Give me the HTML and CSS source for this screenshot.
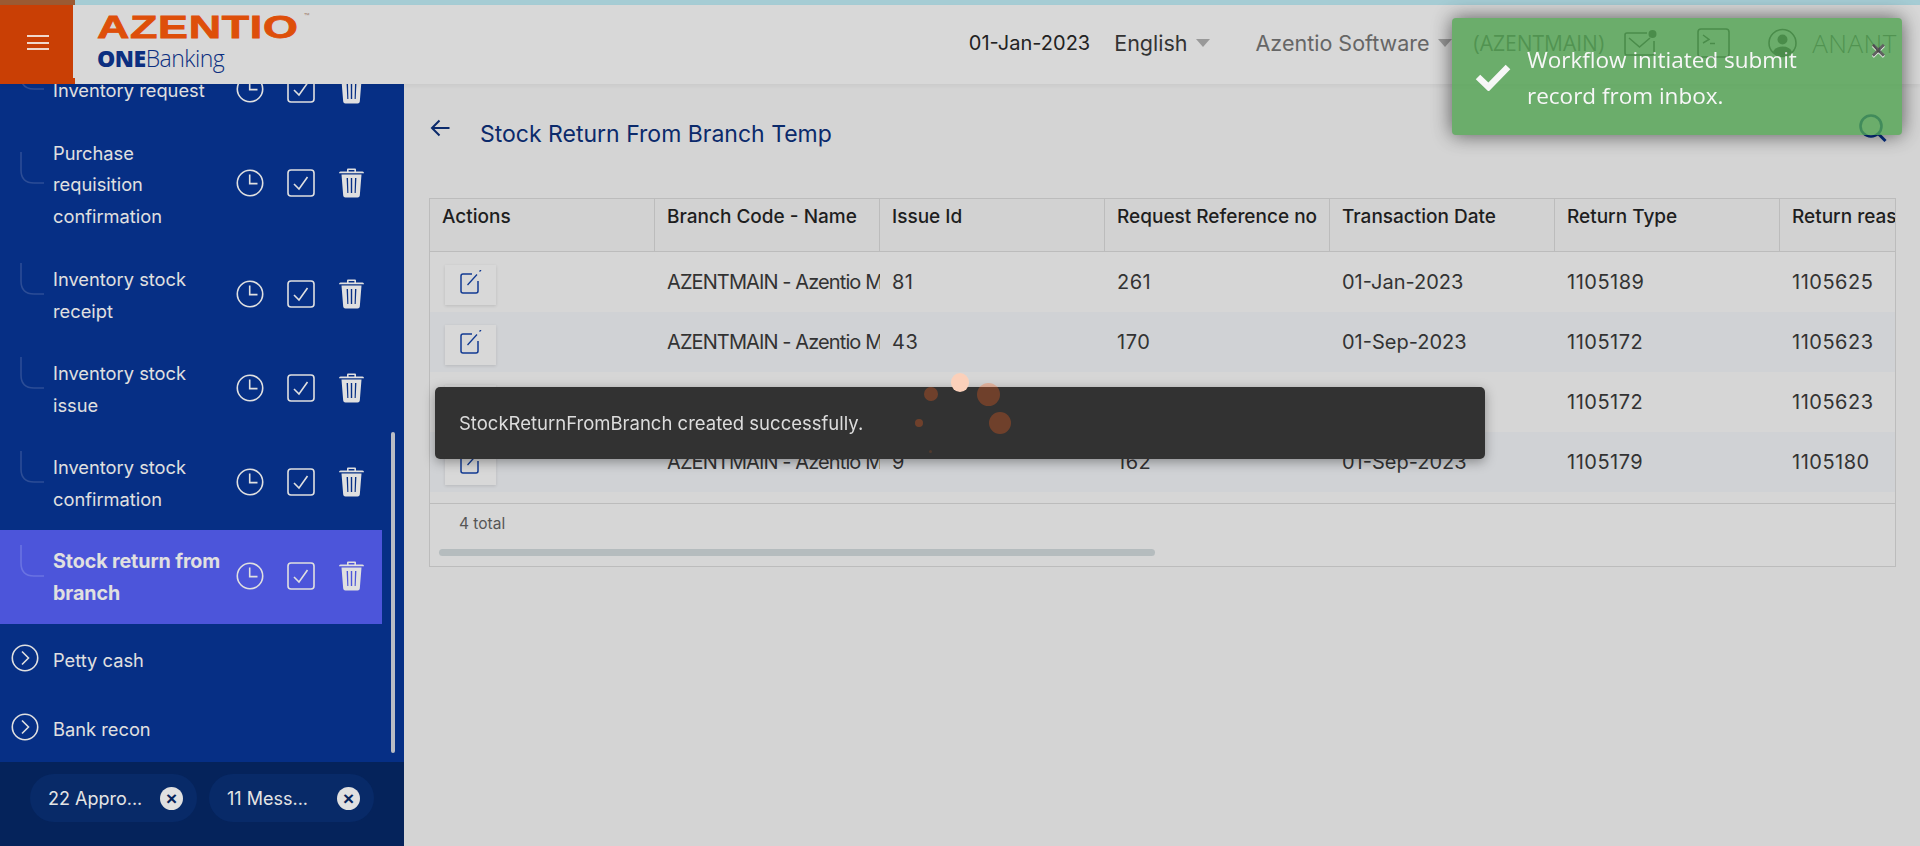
FILE: index.html
```html
<!DOCTYPE html>
<html lang="en">
<head>
<meta charset="utf-8">
<title>Stock Return From Branch Temp</title>
<link rel="stylesheet" href="styles.css">
</head>
<body>
<svg class="defs" width="0" height="0" aria-hidden="true">
  <symbol id="i-clock" viewBox="0 0 28 28"><circle cx="14" cy="14" r="12.7" fill="none" stroke="currentColor" stroke-width="1.6"/><path d="M13.7 5.5V14.6H21.5" fill="none" stroke="currentColor" stroke-width="1.6"/></symbol>
  <symbol id="i-check" viewBox="0 0 28 28"><rect x="1" y="1" width="26" height="26" rx="3" fill="none" stroke="currentColor" stroke-width="1.6"/><path d="M7 15L12 20L20.5 8" fill="none" stroke="currentColor" stroke-width="1.6"/></symbol>
  <symbol id="i-trash" viewBox="0 0 25 30"><path fill="currentColor" fill-rule="evenodd" d="M8 1.5Q8 .5 9 .5H16Q17 .5 17 1.5V3.5H23.5Q25 3.5 25 5.2H0Q0 3.5 1.5 3.5H8ZM9.6 3.5H15.4V2H9.6ZM2.5 6.5H22.5L20.8 27.5Q20.6 29.5 18.6 29.5H6.4Q4.4 29.5 4.2 27.5ZM7.6 10L8.3 25H9.4L9 10ZM11.8 10V25H13.2V10ZM16 10L15.6 25H16.7L17.4 10Z"/></symbol>
  <symbol id="i-chev" viewBox="0 0 28 28"><circle cx="14" cy="14" r="12.7" fill="none" stroke="currentColor" stroke-width="1.6"/><path d="M11 7.5L17.5 14L11 20.5" fill="none" stroke="currentColor" stroke-width="1.6"/></symbol>
  <symbol id="i-elbow" viewBox="0 0 24 66"><path d="M1 1V19Q1 32 14 32H24" fill="none" stroke="currentColor" stroke-width="1.6"/></symbol>
  <symbol id="i-edit" viewBox="0 0 22 24"><path d="M12 4H3Q1 4 1 6V21Q1 23 3 23H16Q18 23 18 21V11" fill="none" stroke="currentColor" stroke-width="1.5"/><path d="M7.5 15L17 4.5M19.5 1.5L21 0" fill="none" stroke="currentColor" stroke-width="1.3"/></symbol>
</svg>

<div class="strip"><div class="strip-brand"></div><div class="strip-rest"></div></div>

<header class="topbar">
  <button class="menu-btn" aria-label="Menu"><span></span><span></span><span></span></button>
  <div class="logo">
    <div class="logo-mark"><span class="logo-word">AZENTIO</span><span class="logo-tm">™</span></div>
    <div class="logo-sub"><b>ONE</b>Banking</div>
  </div>
  <div class="top-right">
    <span class="top-date">01-Jan-2023</span>
    <span class="top-select lang">English<i class="caret"></i></span>
    <span class="top-select org">Azentio Software<i class="caret"></i></span>
    <span class="top-branch">(AZENTMAIN)</span>
    <svg class="ic-mail" width="33" height="26" viewBox="0 0 33 26"><path d="M23 3H3Q1 3 1 5V23Q1 25 3 25H28Q30 25 30 23V11" fill="none" stroke="currentColor" stroke-width="1.6"/><path d="M5 8L15.5 17L26 8" fill="none" stroke="currentColor" stroke-width="1.6"/><circle cx="28.5" cy="4" r="4" fill="currentColor"/></svg>
    <svg class="ic-term" width="33" height="30" viewBox="0 0 33 30"><rect x="1" y="1" width="31" height="28" rx="3" fill="none" stroke="currentColor" stroke-width="1.6"/><path d="M6 7L12 11.5L6 15M13 15.5H18" fill="none" stroke="currentColor" stroke-width="1.5"/></svg>
    <svg class="ic-user" width="29" height="30" viewBox="0 0 29 30"><circle cx="14.5" cy="15" r="13.5" fill="none" stroke="currentColor" stroke-width="1.6"/><circle cx="14.5" cy="11.5" r="5" fill="currentColor"/><path d="M5 24Q7 18.5 14.5 18.5T24 24Q20 28 14.5 28T5 24Z" fill="currentColor"/></svg>
    <span class="top-user">ANANT</span>
  </div>
</header>

<div class="layout">
  <aside class="sidebar">
    <nav class="menu">
      <div class="item one"><svg class="elbow"><use href="#i-elbow"/></svg><span class="item-text">Inventory request</span><span class="acts"><svg class="a-clock"><use href="#i-clock"/></svg><svg class="a-check"><use href="#i-check"/></svg><svg class="a-trash"><use href="#i-trash"/></svg></span></div>
      <div class="item three"><svg class="elbow"><use href="#i-elbow"/></svg><span class="item-text">Purchase requisition confirmation</span><span class="acts"><svg class="a-clock"><use href="#i-clock"/></svg><svg class="a-check"><use href="#i-check"/></svg><svg class="a-trash"><use href="#i-trash"/></svg></span></div>
      <div class="item"><svg class="elbow"><use href="#i-elbow"/></svg><span class="item-text">Inventory stock receipt</span><span class="acts"><svg class="a-clock"><use href="#i-clock"/></svg><svg class="a-check"><use href="#i-check"/></svg><svg class="a-trash"><use href="#i-trash"/></svg></span></div>
      <div class="item"><svg class="elbow"><use href="#i-elbow"/></svg><span class="item-text">Inventory stock issue</span><span class="acts"><svg class="a-clock"><use href="#i-clock"/></svg><svg class="a-check"><use href="#i-check"/></svg><svg class="a-trash"><use href="#i-trash"/></svg></span></div>
      <div class="item"><svg class="elbow"><use href="#i-elbow"/></svg><span class="item-text">Inventory stock confirmation</span><span class="acts"><svg class="a-clock"><use href="#i-clock"/></svg><svg class="a-check"><use href="#i-check"/></svg><svg class="a-trash"><use href="#i-trash"/></svg></span></div>
      <div class="item active"><svg class="elbow"><use href="#i-elbow"/></svg><span class="item-text">Stock return from branch</span><span class="acts"><svg class="a-clock"><use href="#i-clock"/></svg><svg class="a-check"><use href="#i-check"/></svg><svg class="a-trash"><use href="#i-trash"/></svg></span></div>
      <div class="group"><svg class="a-clock"><use href="#i-chev"/></svg><span>Petty cash</span></div>
      <div class="group"><svg class="a-clock"><use href="#i-chev"/></svg><span>Bank recon</span></div>
      <div class="scroll-thumb"></div>
    </nav>
    <div class="chips">
      <div class="chip chip-a"><span class="chip-text">22 Appro...</span><span class="chip-x">×</span></div>
      <div class="chip chip-b"><span class="chip-text">11 Mess...</span><span class="chip-x">×</span></div>
    </div>
  </aside>

  <main class="content">
    <div class="page-head">
      <svg class="back" width="20" height="18" viewBox="0 0 20 18"><path d="M19.5 9H2M9.5 1.5L2 9L9.5 16.5" fill="none" stroke="currentColor" stroke-width="2"/></svg>
      <h1 class="page-title">Stock Return From Branch Temp</h1>
      <svg class="search" width="28" height="29" viewBox="0 0 28 29"><circle cx="12" cy="12" r="10.5" fill="none" stroke="currentColor" stroke-width="2.6"/><path d="M19.5 20L26.5 27" fill="none" stroke="currentColor" stroke-width="3"/></svg>
    </div>

    <section class="grid-card">
      <div class="grid-scroll">
        <table class="grid">
          <thead>
            <tr><th>Actions</th><th>Branch Code - Name</th><th>Issue Id</th><th>Request Reference no</th><th>Transaction Date</th><th>Return Type</th><th>Return reason</th></tr>
          </thead>
          <tbody>
            <tr><td><span class="edit"><svg width="22" height="24"><use href="#i-edit"/></svg></span></td><td class="name">AZENTMAIN - Azentio Main Branch</td><td class="num">81</td><td class="num">261</td><td>01-Jan-2023</td><td class="num">1105189</td><td class="num">1105625</td></tr>
            <tr><td><span class="edit"><svg width="22" height="24"><use href="#i-edit"/></svg></span></td><td class="name">AZENTMAIN - Azentio Main Branch</td><td class="num">43</td><td class="num">170</td><td>01-Sep-2023</td><td class="num">1105172</td><td class="num">1105623</td></tr>
            <tr><td><span class="edit"><svg width="22" height="24"><use href="#i-edit"/></svg></span></td><td></td><td></td><td></td><td></td><td class="num">1105172</td><td class="num">1105623</td></tr>
            <tr><td><span class="edit"><svg width="22" height="24"><use href="#i-edit"/></svg></span></td><td class="name">AZENTMAIN - Azentio Main Branch</td><td class="num">9</td><td class="num">162</td><td>01-Sep-2023</td><td class="num">1105179</td><td class="num">1105180</td></tr>
          </tbody>
        </table>
      </div>
      <div class="grid-foot">4 total</div>
      <div class="hscroll"><div class="hscroll-thumb"></div></div>
    </section>
  </main>
</div>

<div class="snack">StockReturnFromBranch created successfully.</div>

<div class="spinner" aria-hidden="true">
  <i class="dot d1"></i><i class="dot d2"></i><i class="dot d3"></i><i class="dot d4"></i><i class="dot d5"></i><i class="dot d6"></i>
</div>

<div class="toast">
  <svg class="toast-check" width="36" height="28" viewBox="0 0 36 28"><path d="M3 14L13.5 24L33 4" fill="none" stroke="currentColor" stroke-width="6.5"/></svg>
  <div class="toast-msg">Workflow initiated submit record from inbox.</div>
  <span class="toast-close">×</span>
</div>
</body>
</html>
```

FILE: styles.css
```css
* { box-sizing: border-box; }
html, body { height: 100%; }
body {
  margin: 0;
  display: flex;
  flex-direction: column;
  overflow: hidden;
  background: #d4d4d4;
  color: #333;
  font-family: Inter, "Liberation Sans", sans-serif;
  font-size: 18px;
}
.defs { position: absolute; }

.strip { display: flex; flex: 0 0 5px; }
.strip-brand { width: 75px; background: #9b5a33; }
.strip-rest { flex: 1; background: #a5ccd4; }

.topbar {
  flex: 0 0 79px;
  display: flex;
  align-items: flex-start;
  background: #d8d8d8;
  box-shadow: 0 2px 4px rgba(0, 0, 0, .05);
  position: relative;
  z-index: 2;
}
.menu-btn {
  width: 75px;
  height: 79px;
  flex: none;
  border: 0;
  padding: 0 0 4px;
  background: #c93f05;
  display: flex;
  flex-direction: column;
  align-items: center;
  justify-content: center;
  gap: 4.5px;
}
.menu-btn span { display: block; width: 22px; height: 2px; background: #f0d8cc; }
.logo {
  margin-left: -2px;
  width: 300px;
  height: 73px;
  background: #d8d8d8;
  position: relative;
  padding: 6px 0 0 24px;
}
.logo-mark { display: flex; align-items: flex-start; height: 32px; color: #de4f0a; }
.logo-word {
  font: 900 32px/32px "Liberation Sans", sans-serif;
  letter-spacing: .5px;
  -webkit-text-stroke: .8px currentColor;
  transform: scaleX(1.4);
  transform-origin: left center;
  display: inline-block;
  width: 207px;
  white-space: nowrap;
}
.logo-tm { font-size: 9px; line-height: 10px; margin-top: 1px; color: #a08070; }
.logo-sub {
  margin-top: 1px;
  color: #0c2f80;
  font: 300 23px/28px "Open Sans", sans-serif;
  letter-spacing: -.5px;
}
.logo-sub b { font-weight: 800; }

.top-right {
  flex: 1;
  display: flex;
  align-items: center;
  justify-content: flex-end;
  height: 75px;
  padding-right: 23px;
  color: #333;
}
.top-date { margin-right: 24px; font-size: 20px; color: #222; white-space: nowrap; }
.top-select { display: inline-flex; align-items: center; white-space: nowrap; font-size: 21.5px; }
.lang { margin-right: 46px; color: #333; }
.org { margin-right: 22px; color: #666; }
.caret {
  margin-left: 8px;
  width: 0;
  height: 0;
  border: 7px solid transparent;
  border-top: 8px solid #999;
  border-bottom: 0;
}
.top-branch { font: 21px "Open Sans", sans-serif; color: #555; margin-right: 20px; white-space: nowrap; }
.ic-mail { color: #333; margin-right: 40px; }
.ic-term { color: #333; margin-right: 38px; }
.ic-user { color: #333; margin-right: 15px; }
.top-user { font: 300 26px "Open Sans", sans-serif; color: #555; letter-spacing: .5px; white-space: nowrap; }

.layout { flex: 1; min-height: 0; display: flex; }
.sidebar {
  width: 404px;
  flex: none;
  display: flex;
  flex-direction: column;
  background: #062f85;
  color: #e0e0e0;
}
.menu {
  flex: 1;
  min-height: 0;
  position: relative;
  display: flex;
  flex-direction: column;
  justify-content: flex-end;
  overflow: hidden;
  font-size: 18.3px;
}
.item {
  flex: none;
  width: 382px;
  height: 94px;
  padding-left: 20px;
  display: flex;
  align-items: center;
  line-height: 31.5px;
}
.item.one { height: 60px; }
.item.three { height: 128px; }
.item.active { background: #4c55da; font-weight: 700; font-size: 19.7px; letter-spacing: -.1px; }
.item.active .elbow { color: #6a73e2; }
.elbow { flex: none; width: 24px; height: 66px; color: #2c4d96; margin-right: 9px; }
.item-text { width: 172px; flex: none; padding-top: 1.5px; }
.acts { display: flex; align-items: center; margin: 0 0 2px 11px; }
.a-clock { width: 28px; height: 28px; flex: none; }
.a-check { width: 28px; height: 28px; flex: none; margin-left: 23px; }
.a-trash { width: 25px; height: 30px; flex: none; margin-left: 24px; }
.group {
  flex: none;
  height: 69px;
  padding: 3px 0 0 11px;
  display: flex;
  align-items: center;
  gap: 14px;
}
.group .a-clock { position: relative; top: -2px; }
.scroll-thumb {
  position: absolute;
  left: 391px;
  bottom: 9px;
  width: 4px;
  height: 321px;
  border-radius: 2px;
  background: #b9bcc4;
}
.chips {
  flex: 0 0 84px;
  background: #05235b;
  padding: 12px 0 0 30px;
  display: flex;
  align-items: flex-start;
  gap: 12px;
}
.chip {
  height: 48px;
  border-radius: 24px;
  background: #082a68;
  display: flex;
  align-items: center;
  padding-left: 18px;
  color: #e4e4e4;
  line-height: 24px;
}
.chip-a { width: 167px; }
.chip-b { width: 165px; }
.chip-text { flex: 1; white-space: nowrap; padding-top: 2px; }
.chip-x {
  width: 23px;
  height: 23px;
  margin-right: 14px;
  border-radius: 50%;
  background: #e0e0e0;
  color: #05235b;
  font: 700 19px/23px "Liberation Sans", sans-serif;
  text-align: center;
}

.content { flex: 1; min-width: 0; padding: 0 24px 0 25px; }
.page-head {
  height: 114px;
  display: flex;
  align-items: center;
  padding: 0 0 14px 1px;
  color: #0b2a6b;
}
.back { flex: none; position: relative; top: -6px; }
.page-title { margin: 0 0 0 30px; font-size: 23px; font-weight: 400; line-height: 30px; flex: 1; }
.search { flex: none; color: #062f85; margin: 0 9px 0 0; position: relative; top: -6px; }

.grid-card { border: 1px solid #bcbcbc; background: #d6d6d6; height: 369px; }
.grid-scroll { overflow: hidden; height: 305px; border-bottom: 1px solid #bcbcbc; }
.grid { table-layout: fixed; border-collapse: separate; border-spacing: 0; width: 1575px; }
.grid th {
  height: 53px;
  width: 225px;
  padding: 0 12px 17px;
  background: #d2d2d2;
  border-right: 1px solid #bcbcbc;
  border-bottom: 1px solid #bcbcbc;
  text-align: left;
  font-size: 19px;
  font-weight: 500;
  color: #1e1e1e;
  white-space: nowrap;
  overflow: hidden;
}
.grid td {
  height: 60px;
  padding: 0 0 0 12px;
  font-size: 20px;
  white-space: nowrap;
  overflow: hidden;
  color: #333;
  vertical-align: middle;
}
.grid td.name { letter-spacing: -.9px; }
.grid td.num { letter-spacing: .5px; }
.grid tbody tr:nth-child(even) td { background: #d0d2d5; }
.grid td:first-child { padding-left: 15px; }
.edit {
  display: flex;
  align-items: center;
  justify-content: center;
  width: 51px;
  height: 40px;
  margin-top: 5px;
  padding-bottom: 6px;
  color: #123a92;
  background: #d8d8d8;
  box-shadow: 0 1px 3px rgba(0, 0, 0, .12);
}
.grid-foot { height: 45px; padding: 9px 0 0 29px; font-size: 15.5px; color: #555; line-height: 22px; }
.hscroll { padding: 0 9px; }
.hscroll-thumb { width: 716px; height: 7px; border-radius: 4px; background: #b5bcbe; }

.snack {
  position: fixed;
  left: 435px;
  top: 387px;
  width: 1050px;
  height: 72px;
  padding-left: 24px;
  display: flex;
  align-items: center;
  border-radius: 5px;
  background: #323232;
  color: #dcdcdc;
  font-size: 18.5px;
  box-shadow: 0 3px 12px rgba(0, 0, 0, .35);
  z-index: 5;
}
.spinner { position: fixed; left: 0; top: 0; z-index: 6; }
.dot { position: absolute; border-radius: 50%; background: rgba(255, 100, 30, .3); }
.d1 { left: 951px; top: 373px; width: 18px; height: 19px; background: #fbd0ba; }
.d2 { left: 977px; top: 383px; width: 23px; height: 23px; }
.d3 { left: 924px; top: 387px; width: 14px; height: 14px; }
.d4 { left: 989px; top: 412px; width: 22px; height: 22px; }
.d5 { left: 915px; top: 419px; width: 8px; height: 8px; }
.d6 { left: 929px; top: 450px; width: 3px; height: 3px; background: rgba(255, 100, 30, .15); }

.toast {
  position: fixed;
  left: 1452px;
  top: 18px;
  width: 450px;
  height: 117px;
  padding: 24px 40px 0 75px;
  border-radius: 4px;
  background: #51a351;
  color: #fff;
  opacity: .8;
  font: 22.5px/36px "Open Sans", sans-serif;
  box-shadow: 0 0 20px rgba(0, 0, 0, .75);
  z-index: 7;
}
.toast-check { position: absolute; left: 23px; top: 45px; }
.toast-close {
  position: absolute;
  right: 16px;
  top: 14px;
  color: #444;
  font: 700 26px/36px "Liberation Sans", sans-serif;
  text-shadow: 0 1px 0 #fff;
}
```
